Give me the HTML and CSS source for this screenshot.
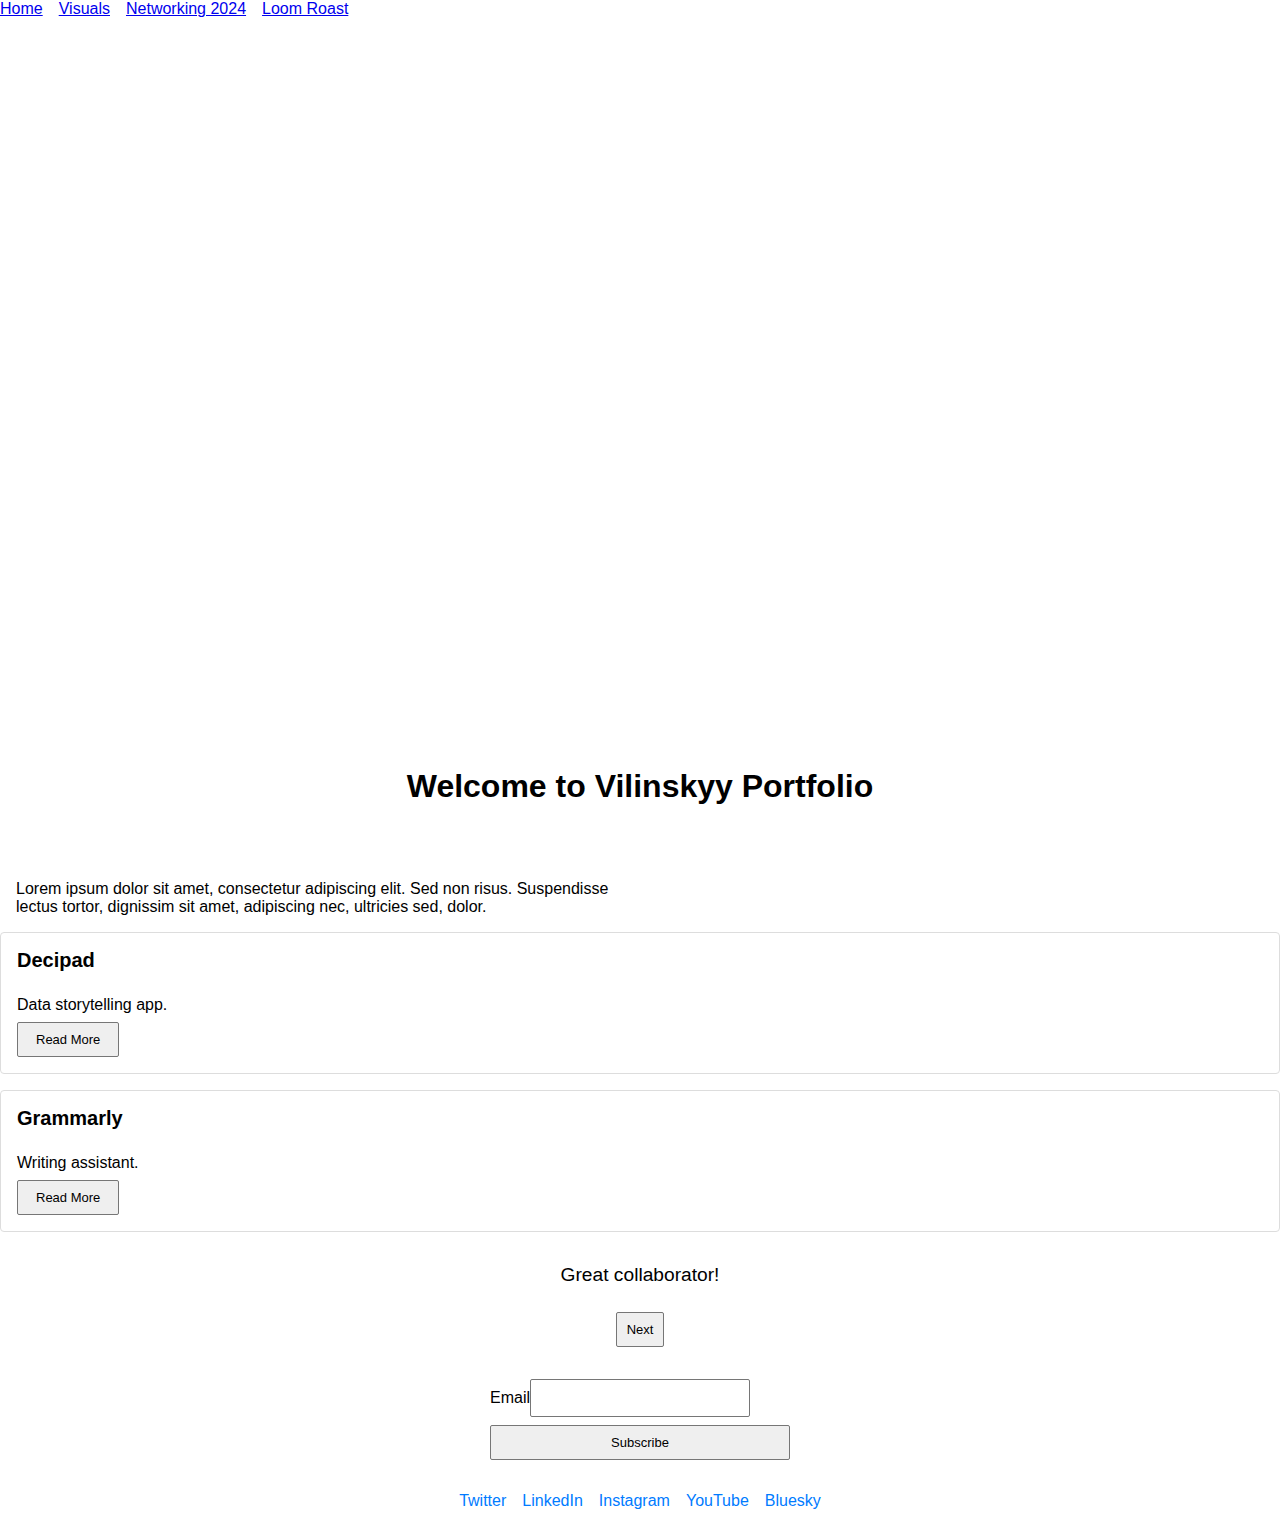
FILE: index.html
```html
<!DOCTYPE html>
<html lang="en">
<head>
<meta charset="utf-8">
<title>Vilinskyy Portfolio</title>
<link rel="stylesheet" href="styles.css">
</head>
<body>
<nav class="nav">
  <a href="#">Home</a>
  <a href="#">Visuals</a>
  <a href="#">Networking 2024</a>
  <a href="#">Loom Roast</a>
</nav>
<section class="hero">
  <div class="hero-media"></div>
  <h1 class="hero-title">Welcome to Vilinskyy Portfolio</h1>
</section>
<section class="intro">
  <p>Lorem ipsum dolor sit amet, consectetur adipiscing elit. Sed non risus. Suspendisse lectus tortor, dignissim sit amet, adipiscing nec, ultricies sed, dolor.</p>
</section>
<section class="projects">
  <article class="card">
    <h3 class="card-title">Decipad</h3>
    <p class="card-text">Data storytelling app.</p>
    <button class="btn">Read More</button>
  </article>
  <article class="card">
    <h3 class="card-title">Grammarly</h3>
    <p class="card-text">Writing assistant.</p>
    <button class="btn">Read More</button>
  </article>
</section>
<section class="testimonial">
  <p class="quote">Great collaborator!</p>
  <button class="btn btn-small">Next</button>
</section>
<form class="subscribe">
  <div class="field">
    <label for="email">Email</label><input id="email" class="email" type="email">
  </div>
  <button type="button" class="btn btn-wide">Subscribe</button>
</form>
<footer class="footer">
  <a href="#">Twitter</a>
  <a href="#">LinkedIn</a>
  <a href="#">Instagram</a>
  <a href="#">YouTube</a>
  <a href="#">Bluesky</a>
</footer>
</body>
</html>
```
FILE: styles.css
```css
html, body {
  margin: 0;
  padding: 0;
  background: #fff;
}
body {
  font-family: "Liberation Sans", Arial, sans-serif;
  font-size: 16px;
  color: #000;
}
.nav {
  display: flex;
  gap: 16px;
  height: 18px;
  line-height: 18px;
}
.nav a {
  color: #0000ee;
}
.hero {
  text-align: center;
}
.hero-media {
  height: 750px;
}
.hero-title {
  font-size: 32px;
  line-height: 37px;
  margin: 0;
  font-weight: bold;
}
.intro {
  padding: 75px 16px 0;
}
.intro p {
  margin: 0;
  max-width: 600px;
  line-height: 18px;
}
.projects {
  display: flex;
  flex-direction: column;
  gap: 16px;
  margin-top: 16px;
}
.card {
  border: 1px solid #ddd;
  border-radius: 4px;
  padding: 16px;
}
.card-title {
  font-size: 20px;
  line-height: 23px;
  margin: 0 0 24px;
}
.card-text {
  margin: 0 0 8px;
  line-height: 18px;
}
.btn {
  font-family: "Liberation Sans", Arial, sans-serif;
  font-size: 13px;
  height: 35px;
  padding: 0 18px;
  background: #efefef;
  border: 1px solid #767676;
  border-radius: 2px;
  color: #000;
}
.btn-small {
  padding: 0 10px;
}
.btn-wide {
  width: 300px;
}
.testimonial {
  text-align: center;
  padding-top: 32px;
}
.quote {
  font-size: 19.2px;
  line-height: 22px;
  margin: 0 0 26px;
}
.subscribe {
  width: 300px;
  margin: 32px auto 0;
  display: flex;
  flex-direction: column;
  gap: 8px;
}
.field {
  display: flex;
  align-items: center;
}
.field label {
  line-height: 18px;
}
.email {
  width: 220px;
  height: 38px;
  box-sizing: border-box;
  border: 1px solid #767676;
  border-radius: 2px;
  padding: 0 8px;
  margin: 0;
}
.footer {
  display: flex;
  justify-content: center;
  gap: 16px;
  margin-top: 32px;
  padding-bottom: 16px;
  line-height: 18px;
}
.footer a {
  color: #007bff;
  text-decoration: none;
}
```
